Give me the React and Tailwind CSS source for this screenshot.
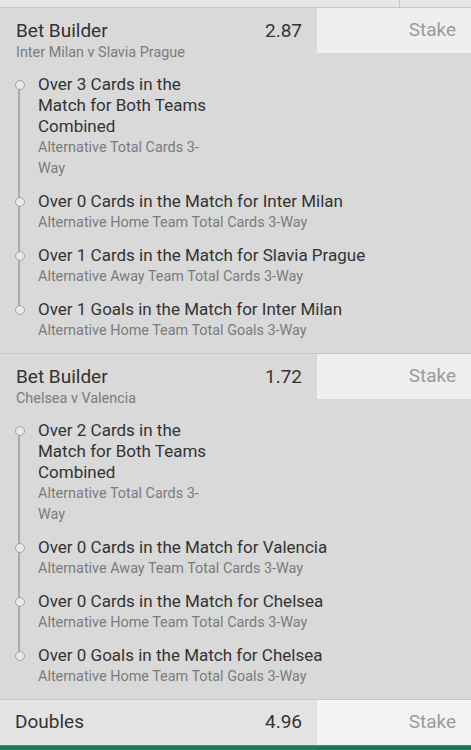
import React from "react";

const sections = [
  {
    title: "Bet Builder",
    odds: "2.87",
    match: "Inter Milan v Slavia Prague",
    legs: [
      { name: "Over 3 Cards in the Match for Both Teams Combined", market: "Alternative Total Cards 3-Way", narrow: true },
      { name: "Over 0 Cards in the Match for Inter Milan", market: "Alternative Home Team Total Cards 3-Way" },
      { name: "Over 1 Cards in the Match for Slavia Prague", market: "Alternative Away Team Total Cards 3-Way" },
      { name: "Over 1 Goals in the Match for Inter Milan", market: "Alternative Home Team Total Goals 3-Way" },
    ],
  },
  {
    title: "Bet Builder",
    odds: "1.72",
    match: "Chelsea v Valencia",
    legs: [
      { name: "Over 2 Cards in the Match for Both Teams Combined", market: "Alternative Total Cards 3-Way", narrow: true },
      { name: "Over 0 Cards in the Match for Valencia", market: "Alternative Away Team Total Cards 3-Way" },
      { name: "Over 0 Cards in the Match for Chelsea", market: "Alternative Home Team Total Cards 3-Way" },
      { name: "Over 0 Goals in the Match for Chelsea", market: "Alternative Home Team Total Goals 3-Way" },
    ],
  },
];

const StakeBox = () => (
  <div className="w-[154px] h-[45px] shrink-0 bg-[#efefef] flex items-center justify-end pr-[15px] text-[19px] text-[#9b9b9b]">
    Stake
  </div>
);

const BetSection = ({ title, odds, match, legs }) => (
  <div className="border-b border-[#c6c6c6]">
    <div className="flex items-start">
      <div className="flex-1 pl-4 pt-[11px]">
        <div className="flex justify-between pr-[15px]">
          <span className="text-[19px] leading-6 text-[#333]">{title}</span>
          <span className="text-[19px] leading-6 text-[#333]">{odds}</span>
        </div>
        <div className="text-[14.4px] leading-5 text-[#7b7b7b]">{match}</div>
      </div>
      <StakeBox />
    </div>

    <div className="relative mt-[11px] pb-[12px] pl-[38px]">
      <div className="absolute left-[18px] top-[11px] bottom-[43px] w-[2px] bg-[#a9a9a9]" />
      {legs.map((leg, i) => (
        <div key={i} className={"relative " + (i < legs.length - 1 ? "mb-3" : "")}>
          <span className="absolute left-[-23px] top-[6px] w-[10px] h-[10px] rounded-full border-[1.5px] border-[#a3a3a3] bg-[#e8e8e8]" />
          <div className={leg.narrow ? "w-[185px]" : ""}>
            <div className="text-[17px] leading-[21px] text-[#333]">{leg.name}</div>
            <div className="text-[14.4px] leading-[21px] text-[#7b7b7b]">{leg.market}</div>
          </div>
        </div>
      ))}
    </div>
  </div>
);

export default function App() {
  return (
    <div className="w-[471px] h-[750px] overflow-hidden bg-[#d9d9d9] font-['Roboto',sans-serif] flex flex-col">
      <div className="h-[8px] shrink-0 flex bg-[#e6e6e6] border-b border-[#c6c6c6]">
        <div className="w-[400px] border-r border-[#c6c6c6]" />
      </div>

      {sections.map((s, i) => (
        <BetSection key={i} {...s} />
      ))}

      <div className="flex items-center h-[45px] shrink-0 bg-[#e3e3e3]">
        <div className="flex-1 flex justify-between pl-[15px] pr-[15px]">
          <span className="text-[19px] text-[#333]">Doubles</span>
          <span className="text-[19px] text-[#333]">4.96</span>
        </div>
        <div className="w-[154px] h-[45px] bg-[#f3f3f3] flex items-center justify-end pr-[15px] text-[19px] text-[#9b9b9b]">
          Stake
        </div>
      </div>
      <div className="flex-1 bg-[#167a5b] border-t border-[#2a9a77]" />
    </div>
  );
}
